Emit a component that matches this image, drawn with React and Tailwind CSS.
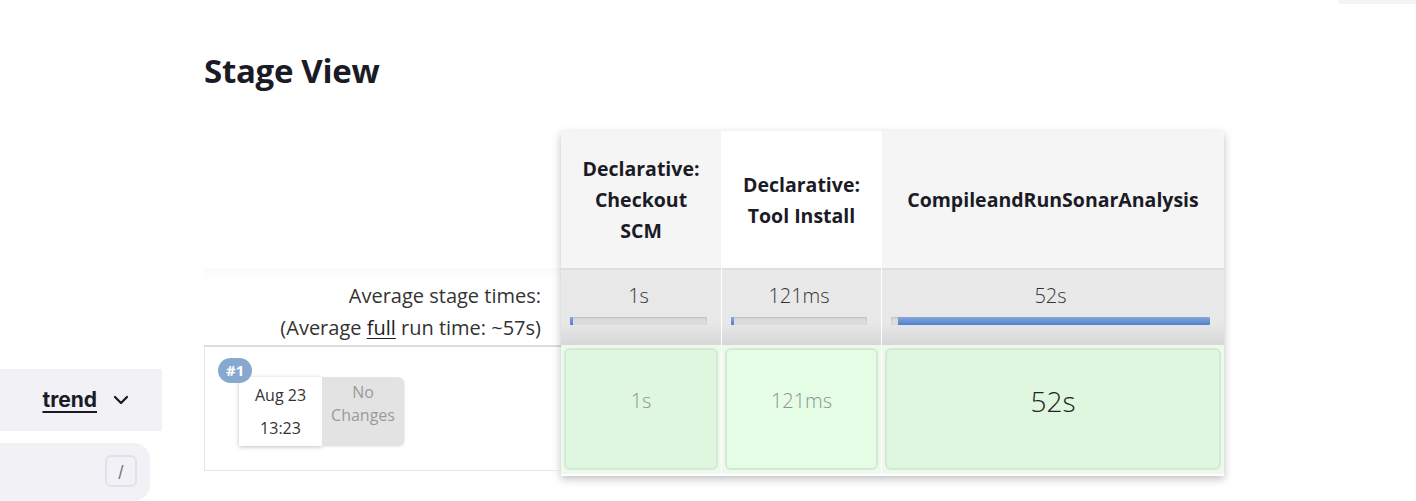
import { ChevronDown } from "lucide-react";

const stages = [
  { name: ["Declarative:", "Checkout", "SCM"], avg: "1s", start: 0, pct: 1.5, run: "1s", head: "bg-[#f5f5f5]", cell: "bg-[#dff7df] pt-[36px]", text: "text-[20px] text-[#8e938e]" },
  { name: ["Declarative:", "Tool Install"], avg: "121ms", start: 0, pct: 1, run: "121ms", head: "bg-white", cell: "bg-[#e4fde4] pt-[36px]", text: "text-[20px] text-[#8e938e]" },
  { name: ["CompileandRunSonarAnalysis"], avg: "52s", start: 2.2, pct: 97.8, run: "52s", head: "bg-[#f5f5f5]", cell: "bg-[#def7de] pt-[30px]", text: "text-[28px] text-[#222]" },
];

function AvgCell({ stage }) {
  return (
    <div className="h-[77px] border-t-2 border-[#dedede] bg-gradient-to-b from-[#e9e9e9] via-[#e8e8e8] via-70% to-[#d7d7d7] pl-[9px] pr-[14px] pt-[14px]">
      <div className="text-center text-[20px] font-light leading-[24px] text-[#333]">{stage.avg}</div>
      <div className="mt-[9px] flex h-[8px] overflow-hidden rounded-[1px] bg-[#dcdcdc] shadow-[inset_0_1px_2px_rgba(0,0,0,0.15)]">
        <div
          className="h-full min-w-[3px] bg-gradient-to-b from-[#86a8d6] to-[#4f7fcf]"
          style={{ marginLeft: `${stage.start}%`, width: `${stage.pct}%` }}
        />
      </div>
    </div>
  );
}

export default function App() {
  return (
    <div className="relative h-[501px] w-full overflow-hidden bg-white font-['Open_Sans','Noto_Sans',sans-serif] text-[#1b1b26]">
      <div className="absolute right-0 top-0 h-[4px] w-[78px] rounded-bl-[6px] bg-[#f4f4f7]" />

      <div className="flex">
        <aside className="w-[162px] shrink-0 pt-[369px]">
          <div className="flex h-[62px] items-center justify-end gap-[12px] bg-[#f2f1f6] pr-[29px]">
            <span className="font-['Inter',sans-serif] text-[21px] font-bold underline decoration-2 underline-offset-[4px]">trend</span>
            <ChevronDown className="h-[24px] w-[24px]" strokeWidth={2.3} />
          </div>
          <div className="mt-[12px] flex h-[58px] w-[150px] items-start justify-end rounded-r-[16px] bg-[#f2f2f6] pr-[13px] pt-[12px]">
            <div className="flex h-[32px] w-[32px] items-center justify-center rounded-[6px] border-2 border-[#e1e1ea] font-['Inter',sans-serif] text-[16px] text-[#6b6b80]">
              /
            </div>
          </div>
        </aside>

        <main className="ml-[42px] pt-[51px]">
          <h1 className="text-[33px] font-bold leading-[40px] tracking-[-0.3px]">Stage View</h1>

          <div className="mt-[40px] flex">
            <div className="w-[357px]">
              <div className="h-[137px]" />
              <div className="h-[79px] border-b-2 border-[#dddddd] bg-gradient-to-b from-[#fafafa] to-white to-20% pr-[20px] pt-[12px] text-right text-[20px] leading-[32px] text-[#333]">
                <div>Average stage times:</div>
                <div>
                  (Average <span className="underline decoration-1 underline-offset-[3px] text-[#1b1b26]">full</span> run time: ~57s)
                </div>
              </div>
              <div className="relative h-[124px] border-b border-l border-[#e6e6e6] pl-[34px] pt-[30px]">
                <span className="absolute left-[13px] top-[11px] z-10 rounded-full bg-[#87a9cf] px-[8px] text-[15px] font-bold leading-[25px] text-white">
                  #1
                </span>
                <div className="flex h-[69px]">
                  <div className="flex w-[83px] flex-col items-center justify-center gap-[15px] bg-white text-[16px] text-[#333] shadow-[0_1px_4px_rgba(0,0,0,0.25)]">
                    <span className="leading-[18px]">Aug 23</span>
                    <span className="leading-[18px]">13:23</span>
                  </div>
                  <div className="flex w-[82px] flex-col items-center rounded-r-[6px] bg-[#e3e3e3] pt-[4px] text-[16px] leading-[23px] text-[#9a9a9a] shadow-[1px_1px_2px_rgba(0,0,0,0.08)]">
                    <span>No</span>
                    <span>Changes</span>
                  </div>
                </div>
              </div>
            </div>

            <div className="h-[345px] bg-white shadow-[0_3px_8px_rgba(0,0,0,0.25)]">
              <div className="grid grid-cols-[160px_159px_342px] gap-x-px">
                {stages.map((s, i) => (
                  <div key={i} className={`flex h-[137px] flex-col items-center justify-center ${s.head} text-[19.5px] font-bold leading-[31px]`}>
                    {s.name.map((l) => (
                      <span key={l}>{l}</span>
                    ))}
                  </div>
                ))}
                {stages.map((s, i) => (
                  <AvgCell key={i} stage={s} />
                ))}
                {stages.map((s, i) => (
                  <div key={i} className="h-[129px] bg-[#eef9ee] px-[3px] pb-[4px] pt-[3px]">
                    <div className={`flex h-full items-start justify-center rounded-[6px] border-2 border-[#d4e9d4] ${s.cell} font-light ${s.text}`}>
                      {s.run}
                    </div>
                  </div>
                ))}
              </div>
            </div>
          </div>
        </main>
      </div>
    </div>
  );
}
